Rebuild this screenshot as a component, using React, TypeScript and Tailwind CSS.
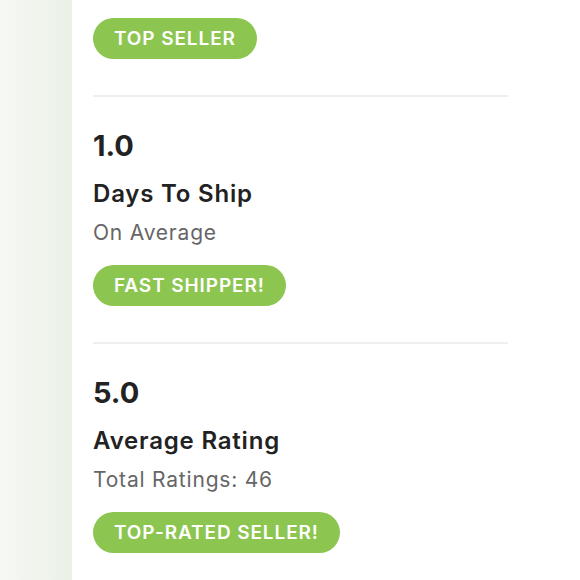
const badge =
  "inline-flex items-center h-[41px] px-[21px] rounded-full bg-[#8cc550] text-white text-[19px] font-semibold tracking-[0.9px] leading-none";

interface StatProps {
  value: string;
  title: string;
  subtitle: string;
  badgeText: string;
}

function Stat({ value, title, subtitle, badgeText }: StatProps) {
  return (
    <div className="flex flex-col items-start pt-[32px] pb-[36px]">
      <div className="text-[29px] leading-[34px] font-bold text-[#222222]">
        {value}
      </div>
      <div className="mt-[16px] text-[24px] leading-[30px] font-semibold tracking-[0.8px] text-[#222222]">
        {title}
      </div>
      <div className="mt-[10px] text-[21px] leading-[28px] tracking-[0.8px] text-[#666666]">
        {subtitle}
      </div>
      <div className="mt-[18px]">
        <span className={badge}>{badgeText}</span>
      </div>
    </div>
  );
}

export default function App() {
  return (
    <div
      className="flex w-[580px] h-[580px] overflow-hidden bg-white"
      style={{ fontFamily: "Inter, 'Open Sans', sans-serif" }}
    >
      <div className="w-[72px] shrink-0 bg-gradient-to-r from-[#f6f8f4] to-[#ebf1e7]" />
      <div className="flex-1 pl-[21px]">
        <div className="w-[415px]">
          <div className="pt-[18px] pb-[36px]">
            <span className={badge}>TOP SELLER</span>
          </div>
          <div className="h-[2px] bg-[#efefef]" />
          <Stat
            value="1.0"
            title="Days To Ship"
            subtitle="On Average"
            badgeText="FAST SHIPPER!"
          />
          <div className="h-[2px] bg-[#efefef]" />
          <Stat
            value="5.0"
            title="Average Rating"
            subtitle="Total Ratings: 46"
            badgeText="TOP-RATED SELLER!"
          />
        </div>
      </div>
    </div>
  );
}
